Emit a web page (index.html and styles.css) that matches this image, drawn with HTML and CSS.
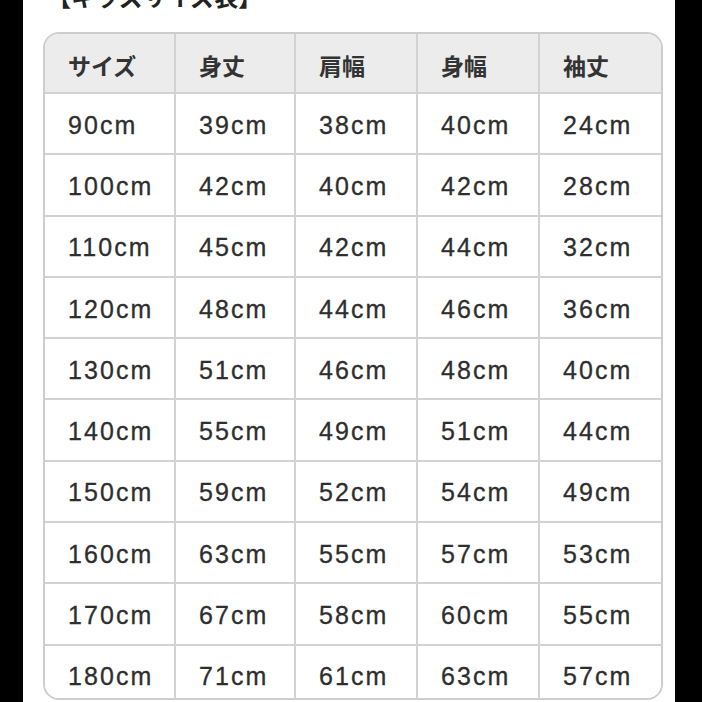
FILE: index.html
```html
<!DOCTYPE html>
<html lang="ja">
<head>
<meta charset="utf-8">
<link rel="stylesheet" href="styles.css">
</head>
<body>
<div class="page">
  <div class="title">【キッズサイズ表】</div>
  <div class="size-table">
    <div class="cell head">サイズ</div><div class="cell head">身丈</div><div class="cell head">肩幅</div><div class="cell head">身幅</div><div class="cell head last">袖丈</div>
    <div class="cell">90cm</div><div class="cell">39cm</div><div class="cell">38cm</div><div class="cell">40cm</div><div class="cell last">24cm</div>
    <div class="cell">100cm</div><div class="cell">42cm</div><div class="cell">40cm</div><div class="cell">42cm</div><div class="cell last">28cm</div>
    <div class="cell">110cm</div><div class="cell">45cm</div><div class="cell">42cm</div><div class="cell">44cm</div><div class="cell last">32cm</div>
    <div class="cell">120cm</div><div class="cell">48cm</div><div class="cell">44cm</div><div class="cell">46cm</div><div class="cell last">36cm</div>
    <div class="cell">130cm</div><div class="cell">51cm</div><div class="cell">46cm</div><div class="cell">48cm</div><div class="cell last">40cm</div>
    <div class="cell">140cm</div><div class="cell">55cm</div><div class="cell">49cm</div><div class="cell">51cm</div><div class="cell last">44cm</div>
    <div class="cell">150cm</div><div class="cell">59cm</div><div class="cell">52cm</div><div class="cell">54cm</div><div class="cell last">49cm</div>
    <div class="cell">160cm</div><div class="cell">63cm</div><div class="cell">55cm</div><div class="cell">57cm</div><div class="cell last">53cm</div>
    <div class="cell">170cm</div><div class="cell">67cm</div><div class="cell">58cm</div><div class="cell">60cm</div><div class="cell last">55cm</div>
    <div class="cell bottom">180cm</div><div class="cell bottom">71cm</div><div class="cell bottom">61cm</div><div class="cell bottom">63cm</div><div class="cell bottom last">57cm</div>
  </div>
</div>
</body>
</html>
```

FILE: styles.css
```css
html, body {
  margin: 0;
  padding: 0;
  background: #000;
  height: 702px;
  overflow: hidden;
}

.page {
  display: flex;
  flex-direction: column;
  margin: 0 27px 0 23px;
  height: 702px;
  background: #fff;
  padding: 0 12px 0 20px;
  box-sizing: border-box;
  font-family: "Liberation Sans", "Noto Sans CJK JP", sans-serif;
  color: #333;
  overflow: hidden;
}

.title {
  flex: none;
  height: 24px;
  margin-top: -16px;
  margin-left: 4px;
  font-size: 24px;
  line-height: 24px;
  font-weight: bold;
  color: #222;
  font-family: "Noto Sans CJK JP", sans-serif;
}

.size-table {
  flex: none;
  margin-top: 24px;
  height: 668px;
  box-sizing: border-box;
  border: 2px solid #cdcdcd;
  border-radius: 16px;
  overflow: hidden;
  display: grid;
  grid-template-columns: 131px 120px 122px 122px 1fr;
  grid-template-rows: 60px repeat(9, 61.3px) 1fr;
}

.cell {
  display: flex;
  align-items: center;
  padding-left: 23px;
  padding-top: 3px;
  border-right: 2px solid #d2d2d2;
  border-bottom: 2px solid #d2d2d2;
  font-size: 25px;
  letter-spacing: 2.1px;
  color: #2e2e2e;
  background: #fff;
  -webkit-text-stroke: 0.3px #2e2e2e;
}

.cell.last {
  border-right: none;
}

.cell.bottom {
  border-bottom: none;
  padding-top: 10px;
}

.cell.head {
  background: #ececec;
  font-family: "Noto Sans CJK JP", sans-serif;
  font-weight: bold;
  font-size: 23px;
  letter-spacing: 0;
  color: #333;
  padding-top: 4px;
  -webkit-text-stroke: 0;
}
```
